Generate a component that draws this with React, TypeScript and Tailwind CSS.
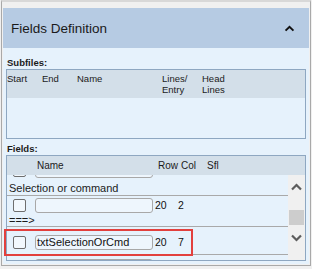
import React from 'react'

const font = "font-['Liberation_Sans',Arial,sans-serif]"

function Check() {
  return <span className="block w-[13px] h-[13px] shrink-0 rounded-[2px] border border-[#6e6e6e] bg-[#f2f8fd]" />
}

function FieldRow({ name, row, col }: { name?: string; row?: string; col?: string }) {
  return (
    <div className="flex items-center h-[15px] pl-[6px]">
      <Check />
      <div className="ml-[9px] w-[118px] h-[15px] shrink-0 rounded-[3px] border border-[#a8a8a8] bg-[#eef6fd] pl-[1px] text-[11px] leading-[13px] text-[#111]">
        {name}
      </div>
      <span className="w-[25px] pl-[2px] text-[10.5px] leading-[13px] text-[#111]">{row}</span>
      <span className="text-[10.5px] leading-[13px] text-[#111]">{col}</span>
    </div>
  )
}

function Chevron({ up, className }: { up?: boolean; className?: string }) {
  return (
    <svg width="11" height="8" viewBox="0 0 11 8" className={className}>
      <polyline
        points={up ? '1,6.5 5.5,2 10,6.5' : '1,1.5 5.5,6 10,1.5'}
        fill="none"
        stroke="currentColor"
        strokeWidth="2.2"
      />
    </svg>
  )
}

export default function App() {
  return (
    <div className={`w-[312px] h-[269px] bg-[#f0f0f0] px-[1px] ${font}`}>
      <div className="h-[266px] border-t-2 border-t-[#d8d8d8] border-x border-b border-[#a9a9a9] px-[1px] pt-[6px] pb-[1px]">
        <div className="w-[306px] h-[256px] flex flex-col">
          {/* header */}
          <div className="h-[40px] bg-[#b6cbe3] flex items-center justify-between pl-[8px] pr-[14px]">
            <span className="text-[13.5px] text-[#1a1a1a] pt-[3px]">Fields Definition</span>
            <Chevron up className="text-[#111] pt-[1px]" />
          </div>

          {/* body */}
          <div className="relative flex-1 bg-[#e6f2fc] px-[3px] pt-[9px] text-[#1b1b1b]">
            <div className="h-[12px] text-[9.5px] leading-[12px] font-semibold pl-[1px]">Subfiles:</div>
            <div className="h-[70px] border border-[#8ea7c1] flex flex-col">
              <div className="h-[28px] bg-[#d3dfe9] flex text-[9.5px] leading-[11px] pt-[3px]">
                <span className="w-[35px]">Start</span>
                <span className="w-[35px]">End</span>
                <span className="w-[85px]">Name</span>
                <span className="w-[40px]">Lines/<br />Entry</span>
                <span>Head<br />Lines</span>
              </div>
            </div>

            <div className="h-[12px] mt-[4px] text-[9.5px] leading-[12px] font-semibold pl-[1px]">Fields:</div>
            <div className="h-[106px] border border-[#8ea7c1] flex flex-col">
              <div className="h-[19px] shrink-0 bg-[#d3dfe9] flex items-center text-[10px] pl-[30px]">
                <span className="w-[121px]">Name</span>
                <span className="w-[23px]">Row</span>
                <span className="w-[26px]">Col</span>
                <span>Sfl</span>
              </div>
              <div className="flex flex-1 overflow-hidden">
                <div className="flex-1 overflow-hidden">
                  <div className="border-b border-[#a9a9a9]">
                    <div className="-mt-[12px]">
                      <FieldRow />
                    </div>
                    <div className="h-[17px] pt-[4px] pl-[2px] text-[11px] leading-[12px]">Selection or command</div>
                  </div>
                  <div className="border-b border-[#a9a9a9] pt-[2px]">
                    <FieldRow row="20" col="2" />
                    <div className="h-[13px] pt-[2px] pl-[2px] text-[11px] leading-[11px]">===&gt;</div>
                  </div>
                  <div className="border-b border-[#a9a9a9] pt-[8px] pb-[4px]">
                    <FieldRow name="txtSelectionOrCmd" row="20" col="7" />
                  </div>
                  <div className="pt-[4px]">
                    <FieldRow />
                  </div>
                </div>
                <div className="w-[17px] shrink-0 bg-[#f0f0f0] flex flex-col items-center pt-[8px] text-[#5c5c5c]">
                  <Chevron up />
                  <div className="mt-[19px] w-[15px] h-[15px] bg-[#cdcdcd]" />
                  <Chevron className="mt-[9px]" />
                </div>
              </div>
            </div>

            {/* highlight annotation */}
            <div className="absolute left-[1px] top-[181px] w-[189px] h-[27px] border-2 border-[#e2403d]" />
          </div>
        </div>
      </div>
    </div>
  )
}
